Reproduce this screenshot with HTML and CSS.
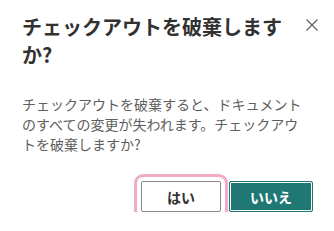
FILE: index.html
```html
<!DOCTYPE html>
<html>
  <head>
    <title>チェックアウトの破棄</title>
    <link rel="stylesheet" href="styles.css">
  </head>

  <body>
    <div class="dialog">
      <div class="dialog-header">
        <h1 class="dialog-title">チェックアウトを破棄しますか?</h1>
        <button class="close-btn" aria-label="閉じる">
          <svg width="12" height="12" viewBox="0 0 12 12">
            <path d="M0.5 0.5 L11.5 11.5 M11.5 0.5 L0.5 11.5" stroke="#605e5c" stroke-width="1.1" fill="none" />
          </svg>
        </button>
      </div>

      <p class="dialog-text">チェックアウトを破棄すると、ドキュメントのすべての変更が失われます。チェックアウトを破棄しますか?</p>

      <div class="dialog-footer">
        <button class="btn btn-default">はい</button>
        <button class="btn btn-primary">いいえ</button>
      </div>
    </div>
  </body>
</html>
```

FILE: styles.css
```css
html,
body {
  overflow: hidden;
}

body {
  font-family: "Noto Sans CJK JP", "Noto Sans", sans-serif;
  background-color: white;
  margin: 0;
}

.dialog {
  width: 334px;
  box-sizing: border-box;
  padding: 13px 10px 0 22px;
}

.dialog-header {
  display: flex;
  align-items: flex-start;
  gap: 14px;
}

.dialog-title {
  flex: 1;
  margin: 0;
  font-size: 20px;
  line-height: 28px;
  font-weight: 700;
  color: #323130;
}

.close-btn {
  flex: 0 0 24px;
  width: 24px;
  height: 24px;
  padding: 0;
  border: none;
  background: none;
  display: flex;
  align-items: center;
  justify-content: center;
  cursor: pointer;
}

.dialog-text {
  margin: 25px 14px 0 0;
  font-size: 14px;
  line-height: 20px;
  color: #605e5c;
}

.dialog-footer {
  display: flex;
  justify-content: flex-end;
  gap: 8px;
  margin-top: 27px;
  padding-right: 11px;
}

.btn {
  box-sizing: border-box;
  flex: 0 0 auto;
  height: 31px;
  padding: 0;
  border-radius: 2px;
  font-family: inherit;
  font-size: 14px;
  line-height: 20px;
  font-weight: 700;
  cursor: pointer;
}

.btn-default {
  width: 80px;
  background-color: white;
  color: #323130;
  border: 1px solid #8a8886;
  outline: 3px solid #f2abc6;
  outline-offset: 4px;
}

.btn-primary {
  width: 84px;
  background-color: #1f7874;
  color: white;
  border: 1px solid #1f7874;
  box-shadow: inset 0 0 0 1px #ffffff;
}
```
